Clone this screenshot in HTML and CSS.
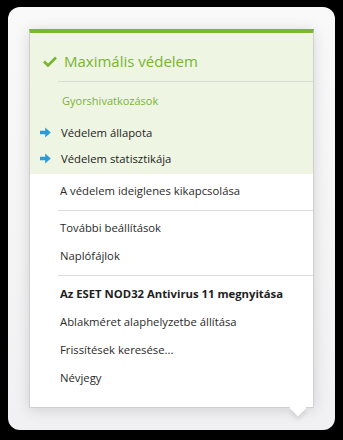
FILE: index.html
```html
<!DOCTYPE html>
<html lang="hu">
<head>
<meta charset="utf-8">
<link rel="stylesheet" href="styles.css">
</head>
<body>
<div class="frame">
  <div class="panel">
    <div class="status">
      <div class="title">
        <svg class="check" width="14" height="11" viewBox="0 0 14 11"><path d="M1 5.5 L5 9.5 L13 1.5" fill="none" stroke="#78b42e" stroke-width="2.6"/></svg>
        <span>Maximális védelem</span>
      </div>
      <div class="subtitle">Gyorshivatkozások</div>
      <div class="links">
        <div class="link"><svg class="arrow" width="11" height="11" viewBox="0 0 11 11"><path d="M0 3.8 H5.2 V0.5 L10.8 5.5 L5.2 10.5 V7.2 H0 Z" fill="#2c9ad6"/></svg><span>Védelem állapota</span></div>
        <div class="link"><svg class="arrow" width="11" height="11" viewBox="0 0 11 11"><path d="M0 3.8 H5.2 V0.5 L10.8 5.5 L5.2 10.5 V7.2 H0 Z" fill="#2c9ad6"/></svg><span>Védelem statisztikája</span></div>
      </div>
    </div>
    <div class="group g1">
      <div class="item">A védelem ideiglenes kikapcsolása</div>
    </div>
    <div class="group g2">
      <div class="item">További beállítások</div>
      <div class="item">Naplófájlok</div>
    </div>
    <div class="group g3">
      <div class="item bold">Az ESET NOD32 Antivirus 11 megnyitása</div>
      <div class="item">Ablakméret alaphelyzetbe állítása</div>
      <div class="item">Frissítések keresése...</div>
      <div class="item">Névjegy</div>
    </div>
    <div class="notch"></div>
  </div>
</div>
</body>
</html>
```

FILE: styles.css
```css
* { box-sizing: border-box; }
html, body { margin: 0; padding: 0; }
body {
  width: 343px;
  height: 440px;
  background: #000;
  font-family: "Open Sans", "Noto Sans", sans-serif;
  font-size: 11.3px;
  color: #333;
  padding: 7px 8px 0 8px;
}
.frame {
  width: 327px;
  height: 423px;
  border-radius: 12px;
  background: linear-gradient(#f9f9f9, #f1f1f3);
  padding: 22px 21px 0 21px;
}
.panel {
  position: relative;
  width: 285px;
  height: 379px;
  background: #fff;
  border: 1px solid #cfcfcf;
  border-top: 4px solid #7cb733;
  box-shadow: 0 2px 14px rgba(0, 0, 0, 0.14);
}
.status {
  background: #eef6e3;
  height: 141px;
}
.title {
  height: 49px;
  padding-top: 8px;
  margin-left: 28px;
  display: flex;
  align-items: center;
  color: #7ab42f;
  font-size: 15px;
  border-bottom: 1px solid #d6dccf;
}
.title .check { margin-left: -15px; margin-right: 7px; }
.title span { margin-top: -1px; }
.subtitle {
  height: 37px;
  display: flex;
  align-items: center;
  padding-left: 32px;
  color: #7ab42f;
  font-size: 11px;
}
.links { display: flex; flex-direction: column; }
.link {
  height: 26px;
  display: flex;
  align-items: center;
  padding-left: 10px;
  color: #222;
}
.link .arrow { margin-right: 10px; }
.group { padding-left: 30px; }
.g1 { padding-top: 2px; padding-bottom: 6px; }
.g2 { padding-top: 2px; padding-bottom: 6px; }
.g3 { padding-top: 3px; }
.g1, .g2 { border-bottom: 1px solid #dcdcdc; margin-left: 28px; padding-left: 2px; }
.item {
  height: 28px;
  display: flex;
  align-items: center;
  color: #2a2a2a;
}
.bold { font-weight: 700; color: #1e1e1e; }
.notch {
  position: absolute;
  right: 9px;
  bottom: -7px;
  width: 12px;
  height: 12px;
  background: #fff;
  transform: rotate(45deg);
  box-shadow: 3px 3px 4px rgba(0, 0, 0, 0.08);
}
```
